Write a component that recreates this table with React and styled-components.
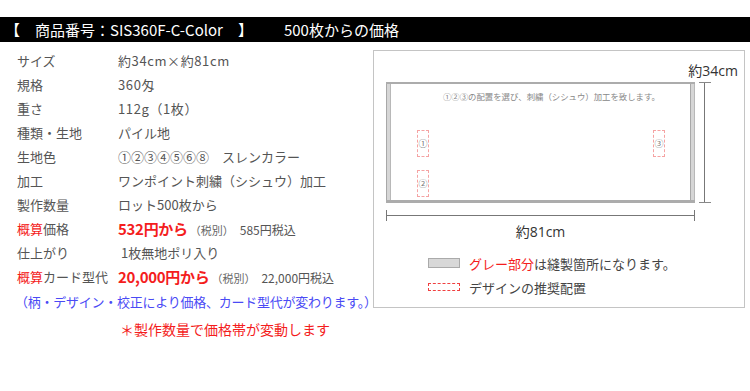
import React from "react";
import styled, { createGlobalStyle } from "styled-components";

const Global = createGlobalStyle`
  html, body { margin: 0; padding: 0; background: #fff; }
  body { font-family: "Noto Sans CJK JP", "Noto Sans", sans-serif; color: #555; }
`;

const Page = styled.div`
  width: 750px;
  height: 391px;
  padding-top: 17px;
  box-sizing: border-box;
  overflow: hidden;
`;

const HeaderBar = styled.div`
  height: 25px;
  background: #000;
  color: #fff;
  font-size: 15px;
  line-height: 25px;
  padding-left: 5px;
  display: flex;
  white-space: pre;
`;

const HeaderSub = styled.span`
  margin-left: 31px;
`;

const Body = styled.div`
  display: flex;
  align-items: flex-start;
`;

const LeftCol = styled.div`
  width: 373px;
  flex: none;
  padding-top: 6px;
`;

const Specs = styled.div`
  display: grid;
  grid-template-columns: 101px 1fr;
  grid-auto-rows: 24px;
  padding-left: 17px;
  font-size: 13px;
  align-items: center;
  white-space: pre;
`;

const Label = styled.div`
  color: #555;
`;

const Red = styled.span`
  color: #f41d1d;
`;

const Value = styled.div`
  color: #555;
  display: flex;
  align-items: baseline;
  letter-spacing: ${(p) => (p.$wide ? "0.6px" : "0")};
`;

const Price = styled.span`
  color: #f41d1d;
  font-size: 15px;
  font-weight: 700;
  letter-spacing: -0.3px;
`;

const Small = styled.span`
  font-size: 11px;
  margin-left: ${(p) => p.$ml || 2}px;
  color: #666;
`;

const Incl = styled.span`
  font-size: 12px;
  margin-left: 6px;
  color: #555;
`;

const Note = styled.div`
  padding-left: 15px;
  margin-top: 2px;
  color: #4a4af5;
  font-size: 13px;
  letter-spacing: -0.25px;
  line-height: 24px;
  white-space: nowrap;
`;

const Warn = styled.div`
  padding-left: 120px;
  margin-top: 5px;
  color: #f41d1d;
  font-size: 14px;
  line-height: 20px;
  white-space: nowrap;
`;

const Panel = styled.div`
  margin-top: 8px;
  width: 372px;
  height: 258px;
  box-sizing: border-box;
  border: 1px solid #c4c4c4;
  padding-left: 12px;
  display: flex;
  flex-direction: column;
`;

const DimTopLabel = styled.div`
  height: 31px;
  font-size: 14px;
  line-height: 16px;
  color: #333;
  text-align: right;
  padding-right: 6px;
  padding-top: 12px;
  box-sizing: border-box;
  font-family: "Open Sans", "Noto Sans CJK JP", sans-serif;
`;

const TowelRow = styled.div`
  display: flex;
  align-items: stretch;
`;

const Towel = styled.div`
  position: relative;
  width: 309px;
  height: 121px;
  box-sizing: border-box;
  border-top: 2px solid #acacac;
  border-bottom: 3px solid #acacac;
  display: flex;
`;

const Seam = styled.div`
  width: 5px;
  flex: none;
  background: #d6d6d6;
  border-left: 1px solid #a8a8a8;
  border-right: 1px solid #b8b8b8;
  box-sizing: border-box;
`;

const TowelBody = styled.div`
  flex: 1;
  padding-top: 6px;
  padding-left: 52px;
  font-size: 8.4px;
  color: #888;
  white-space: nowrap;
  line-height: 12px;
`;

const Marker = styled.div`
  position: absolute;
  left: ${(p) => p.$x}px;
  top: ${(p) => p.$y}px;
  width: 12px;
  height: 27px;
  box-sizing: border-box;
  border: 1px dashed #f5a3a3;
  font-size: 9px;
  color: #777;
  display: flex;
  align-items: center;
  justify-content: center;
`;

const VDim = styled.div`
  width: 12px;
  margin-left: 4px;
  position: relative;
  border-top: 1px solid #888;
  border-bottom: 1px solid #888;
  box-sizing: border-box;
  &::after {
    content: "";
    position: absolute;
    left: 5px;
    top: 0;
    bottom: 0;
    width: 1px;
    background: #777;
  }
`;

const HDim = styled.div`
  width: 309px;
  height: 11px;
  margin-top: 7px;
  box-sizing: border-box;
  border-left: 1px solid #777;
  border-right: 1px solid #777;
  position: relative;
  &::after {
    content: "";
    position: absolute;
    left: 0;
    right: 0;
    top: 5px;
    height: 1px;
    background: #777;
  }
`;

const DimBottomLabel = styled.div`
  width: 309px;
  text-align: center;
  font-size: 14px;
  line-height: 18px;
  margin-top: 2px;
  color: #333;
  font-family: "Open Sans", "Noto Sans CJK JP", sans-serif;
`;

const Legend = styled.div`
  margin-top: 13px;
  padding-left: 42px;
  display: flex;
  flex-direction: column;
  gap: 6px;
`;

const LegendRow = styled.div`
  display: flex;
  align-items: center;
  height: 18px;
  font-size: 13px;
  color: #444;
  white-space: nowrap;
`;

const Swatch = styled.div`
  width: 32px;
  height: ${(p) => (p.$dashed ? 8 : 10)}px;
  box-sizing: border-box;
  margin-right: 9px;
  background: ${(p) => (p.$dashed ? "transparent" : "#d8d8d8")};
  border: 1px ${(p) => (p.$dashed ? "dashed #f04040" : "solid #aaa")};
`;

const specs = [
  ["サイズ", "約34cm×約81cm", true],
  ["規格", "360匁", true],
  ["重さ", "112g（1枚）", true],
  ["種類・生地", "パイル地"],
  ["生地色", "①②③④⑤⑥⑧　スレンカラー"],
  ["加工", "ワンポイント刺繍（シシュウ）加工"],
  ["製作数量", "ロット500枚から"],
];

export default function App() {
  return (
    <Page>
      <Global />
      <HeaderBar>
        <span>【　商品番号：SIS360F-C-Color　】</span>
        <HeaderSub>500枚からの価格</HeaderSub>
      </HeaderBar>
      <Body>
        <LeftCol>
          <Specs>
            {specs.map(([l, v, wide]) => (
              <React.Fragment key={l}>
                <Label>{l}</Label>
                <Value $wide={wide}>{v}</Value>
              </React.Fragment>
            ))}
            <Label>
              <Red>概算</Red>価格
            </Label>
            <Value>
              <Price>532円から</Price>
              <Small>（税別）</Small>
              <Incl>585円税込</Incl>
            </Value>
            <Label>仕上がり</Label>
            <Value> 1枚無地ポリ入り</Value>
            <Label>
              <Red>概算</Red>カード型代
            </Label>
            <Value>
              <Price>20,000円から</Price>
              <Small>（税別）</Small>
              <Incl>22,000円税込</Incl>
            </Value>
          </Specs>
          <Note>（柄・デザイン・校正により価格、カード型代が変わります。）</Note>
          <Warn>＊製作数量で価格帯が変動します</Warn>
        </LeftCol>
        <Panel>
          <DimTopLabel>約34cm</DimTopLabel>
          <TowelRow>
            <Towel>
              <Seam />
              <TowelBody>①②③の配置を選び、刺繍（シシュウ）加工を致します。</TowelBody>
              <Seam />
              <Marker $x={31} $y={46}>①</Marker>
              <Marker $x={31} $y={86}>②</Marker>
              <Marker $x={267} $y={46}>③</Marker>
            </Towel>
            <VDim />
          </TowelRow>
          <HDim />
          <DimBottomLabel>約81cm</DimBottomLabel>
          <Legend>
            <LegendRow>
              <Swatch />
              <Red>グレー部分</Red>は縫製箇所になります。
            </LegendRow>
            <LegendRow>
              <Swatch $dashed />
              デザインの推奨配置
            </LegendRow>
          </Legend>
        </Panel>
      </Body>
    </Page>
  );
}
